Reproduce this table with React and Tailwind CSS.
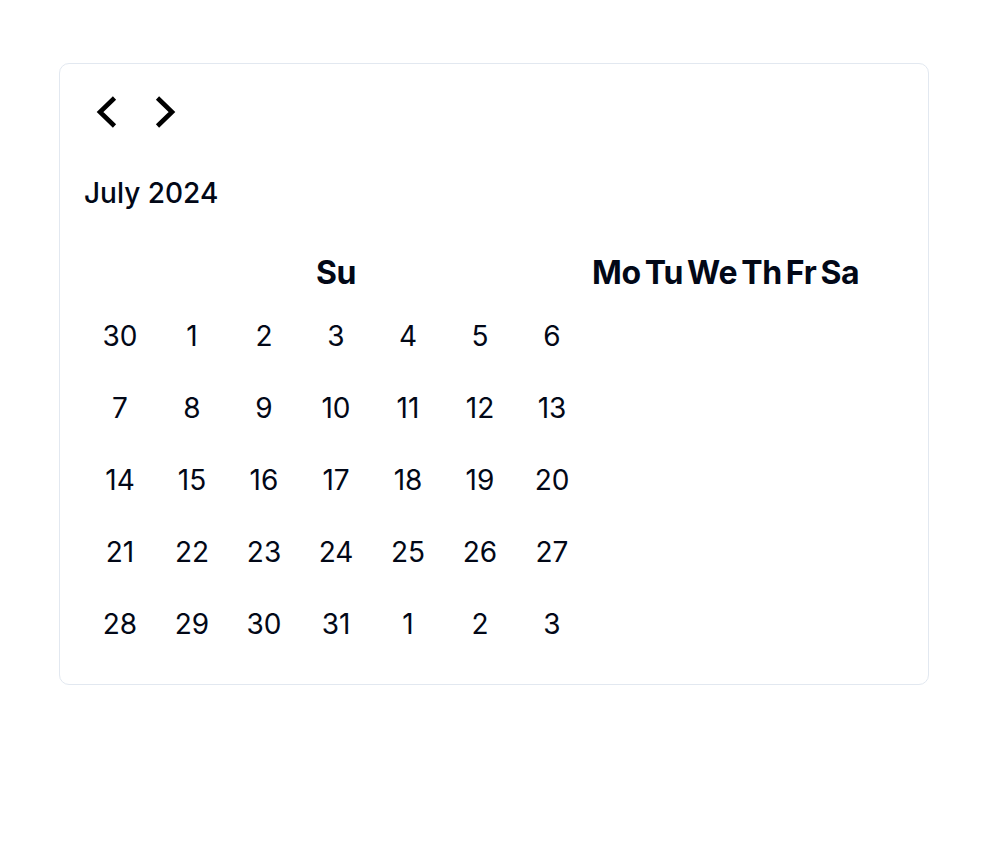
const weeks = [
  [30, 1, 2, 3, 4, 5, 6],
  [7, 8, 9, 10, 11, 12, 13],
  [14, 15, 16, 17, 18, 19, 20],
  [21, 22, 23, 24, 25, 26, 27],
  [28, 29, 30, 31, 1, 2, 3],
];

const otherDays = ['Mo', 'Tu', 'We', 'Th', 'Fr', 'Sa'];

function Chevron({ dir }) {
  return (
    <svg width="40" height="40" viewBox="0 0 40 40" fill="none">
      <path
        d={dir === 'left' ? 'M28.5 6 L14 20 L28.5 34' : 'M11.5 6 L26 20 L11.5 34'}
        stroke="#000"
        strokeWidth="4.6"
        strokeLinecap="butt"
        strokeLinejoin="miter"
      />
    </svg>
  );
}

export default function App() {
  return (
    <div className="min-h-[860px] bg-white pt-[63px] font-['Inter',sans-serif] text-[#020817]">
      <div className="mx-auto w-[870px] rounded-[10px] border border-[#e2e8f0] px-6 pb-6 pt-6">
        <div className="flex h-12 items-center gap-5 pl-[2px]">
          <button className="flex h-10 w-10 items-center justify-center">
            <Chevron dir="left" />
          </button>
          <button className="flex h-10 w-10 items-center justify-center">
            <Chevron dir="right" />
          </button>
        </div>
        <div className="mt-[37px] text-[28px] font-medium leading-[40px]">July 2024</div>
        <div className="mt-[33px] flex h-[54px] items-center gap-1 text-[32px] font-bold leading-[54px] tracking-[-0.01em]">
          <div className="w-[504px] text-center">Su</div>
          {otherDays.map((d) => (
            <div key={d}>{d}</div>
          ))}
        </div>
        <div className="flex flex-col">
          {weeks.map((w, i) => (
            <div key={i} className="flex">
              {w.map((d, j) => (
                <div
                  key={j}
                  className="flex h-[72px] w-[72px] items-center justify-center text-[28px]"
                >
                  {d}
                </div>
              ))}
            </div>
          ))}
        </div>
      </div>
    </div>
  );
}
